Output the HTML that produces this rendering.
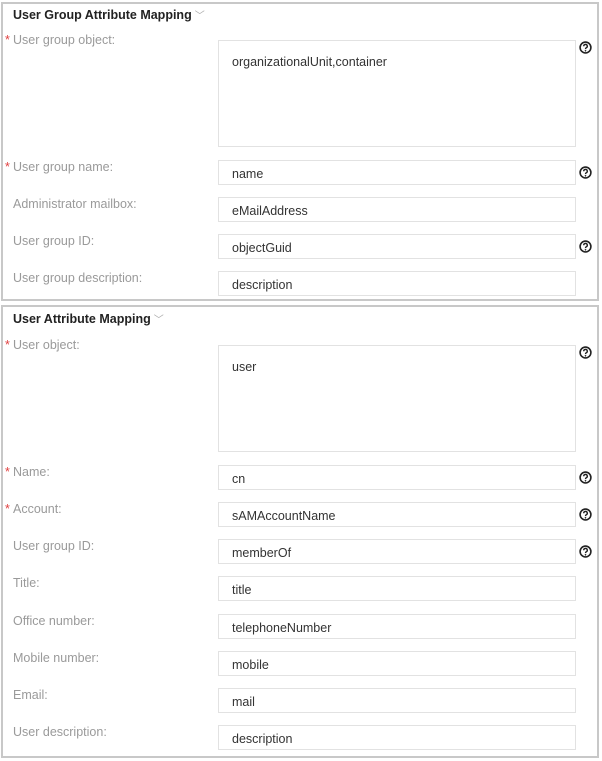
<!DOCTYPE html>
<html><head><meta charset="utf-8"><style>
*{margin:0;padding:0;box-sizing:border-box}
body{width:602px;height:761px;background:#fff;position:relative;font-family:"Liberation Sans",Arial,sans-serif;overflow:hidden}
.panel{position:absolute;left:1px;width:598px;border:2px solid #c8c8c8;background:#fff}
.t{position:absolute;left:10px;font-size:12.5px;font-weight:bold;color:#222}
.t span{font-weight:normal;color:#aaa;font-size:10px;margin-left:3px}
.l{position:absolute;left:10px;font-size:12.5px;color:#9a9a9a}
.l.r:before{content:"*";color:#e04040;position:absolute;left:-8px;top:0}
.i{position:absolute;left:215px;width:358px;height:25px;border:1px solid #e2e2e2;font-size:12.5px;color:#333;padding:6px 0 0 13px}
.ta{height:107px;padding-top:14px}
.h{position:absolute;left:576px;width:13px;height:13px}
</style></head><body>
<svg width="0" height="0" style="position:absolute"><defs><g id="q"><circle cx="6.5" cy="6.5" r="5.4" fill="none" stroke="#222" stroke-width="1.6"/><path d="M4.7 5.2a1.8 1.8 0 1 1 2.6 1.6c-.6.3-.8.6-.8 1.3" fill="none" stroke="#222" stroke-width="1.4"/><circle cx="6.5" cy="9.8" r=".85" fill="#222"/></g></defs></svg>
<div class="panel" style="top:2px;height:299px">
<div class="t" style="top:3px">User Group Attribute Mapping<span>﹀</span></div>
<div class="l r" style="top:29px">User group object:</div>
<div class="i ta" style="top:36px">organizationalUnit,container</div>
<svg class="h" style="top:37px"><use href="#q"/></svg>
<div class="l r" style="top:156px">User group name:</div>
<div class="i" style="top:156px">name</div>
<svg class="h" style="top:162px"><use href="#q"/></svg>
<div class="l" style="top:193px">Administrator mailbox:</div>
<div class="i" style="top:193px">eMailAddress</div>
<div class="l" style="top:230px">User group ID:</div>
<div class="i" style="top:230px">objectGuid</div>
<svg class="h" style="top:236px"><use href="#q"/></svg>
<div class="l" style="top:267px">User group description:</div>
<div class="i" style="top:267px">description</div>
</div>
<div class="panel" style="top:305px;height:453px">
<div class="t" style="top:4px">User Attribute Mapping<span>﹀</span></div>
<div class="l r" style="top:31px">User object:</div>
<div class="i ta" style="top:38px">user</div>
<svg class="h" style="top:39px"><use href="#q"/></svg>
<div class="l r" style="top:158px">Name:</div>
<div class="i" style="top:158px">cn</div>
<svg class="h" style="top:164px"><use href="#q"/></svg>
<div class="l r" style="top:195px">Account:</div>
<div class="i" style="top:195px">sAMAccountName</div>
<svg class="h" style="top:201px"><use href="#q"/></svg>
<div class="l" style="top:232px">User group ID:</div>
<div class="i" style="top:232px">memberOf</div>
<svg class="h" style="top:238px"><use href="#q"/></svg>
<div class="l" style="top:269px">Title:</div>
<div class="i" style="top:269px">title</div>
<div class="l" style="top:307px">Office number:</div>
<div class="i" style="top:307px">telephoneNumber</div>
<div class="l" style="top:344px">Mobile number:</div>
<div class="i" style="top:344px">mobile</div>
<div class="l" style="top:381px">Email:</div>
<div class="i" style="top:381px">mail</div>
<div class="l" style="top:418px">User description:</div>
<div class="i" style="top:418px">description</div>
</div>
</body></html>
